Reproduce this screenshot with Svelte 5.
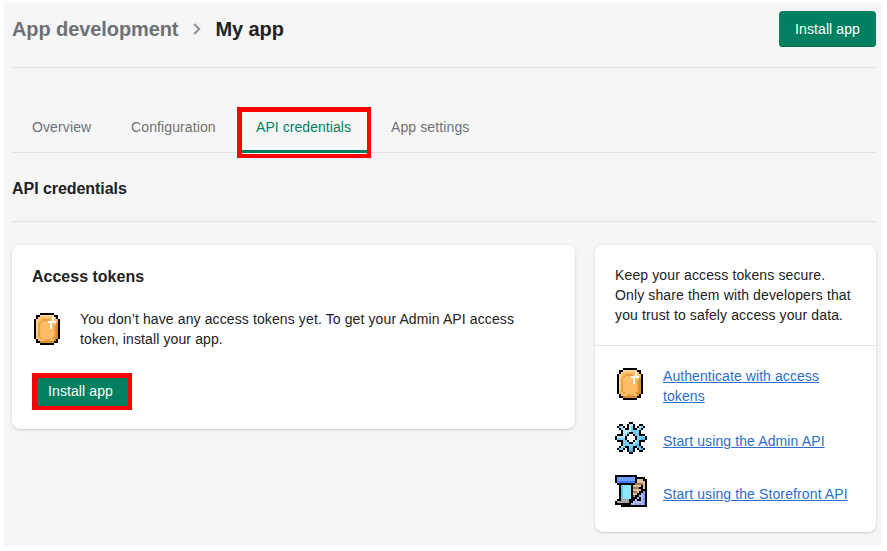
<script>
  const palette = {
    k: '#000000', y: '#ffd795', o: '#ffbe66', d: '#d98c2b', e: '#e9a044', w: '#ffffff',
    l: '#b9eaff', b: '#78cdf8', s: '#4aa8e4',
    r: '#6fa0ff', R: '#3f78f0', c: '#8fe6fa', C: '#62c8ec', g: '#a3a3a3', G: '#777777',
    t: '#dfc09a', T: '#9c7a54', n: '#65462c', p: '#b4bcff', P: '#7f9bf8'
  };
  const coin = [
    '....kkkkkkk.....',
    '..kkyyyyyyykk...',
    '..kyoooooowok...',
    '.kyooeeeeowook..',
    '.kyoeooowwwwok..',
    '.kyeooooowoodk..',
    '.kyeooooowoedk..',
    '.kyeooooowoedk..',
    '.kyeoooooooedk..',
    '.kyeoooooooedk..',
    '.kyeoooooooedk..',
    '.koeoooooooedk..',
    '.kooeoooooeddk..',
    '..koooeeeoodk...',
    '..kkdddddddkk...',
    '....kkkkkkk.....'
  ];
  const gear = [
    '.......kk.......',
    '..kk..kllk..kk..',
    '.kblk.klbk.klbk.',
    '..kblkklbkklbk..',
    '...kllllbbbbk...',
    '...kllbkkbbbk...',
    '.kkklbkwwkbbkkk.',
    'kllllkwwwwkbbbbk',
    'kbbbbkwwwwkbbssk',
    '.kkkbbkwwklbkkk.',
    '...kbbbkklbbk...',
    '...kbbbbbbbsk...',
    '..kbbkkbbkkbsk..',
    '.kbbk.kbsk.kbsk.',
    '..kk..kssk..kk..',
    '.......kk.......'
  ];
  const store = [
    'kkkkkkkkkkk.....',
    'krrrrrrrrrkkkkk.',
    'krrrrrrrrrktttkk',
    'kRRRRRRRRRkttttk',
    '.kkkkkkkkkTTTTtk',
    '..kCcccckttttktk',
    '..kCcccckTTTkktk',
    '..kCcccckttttkkk',
    '..kCcccckTTtkkPk',
    '..kCcccckttkkpPk',
    '..kCcccckTkkppPk',
    '..kCcccckkkpkpPk',
    '.kkggggkkkpkkpPk',
    'kggggggkkpppppPk',
    'kkkkkkkkppPpPpPk',
    '...kkkkkkkkkkkkk'
  ];
  const links = [
    { art: coin, label: 'Authenticate with access tokens', single: false },
    { art: gear, label: 'Start using the Admin API', single: true },
    { art: store, label: 'Start using the Storefront API', single: true }
  ];
</script>

{#snippet sprite(rows)}
  <svg class="sprite" viewBox="0 0 16 16" shape-rendering="crispEdges" aria-hidden="true">
    {#each rows as row, y}
      {#each row.split('') as cell, x}
        {#if palette[cell]}<rect {x} {y} width="1" height="1" fill={palette[cell]} />{/if}
      {/each}
    {/each}
  </svg>
{/snippet}

<main>
  <header>
    <h1>
      <span class="parent">App development</span>
      <svg class="chevron" viewBox="0 0 8 12" aria-hidden="true"><path d="M1.2 1 6.2 6l-5 5" /></svg>
      <span>My app</span>
    </h1>
    <button class="primary">Install app</button>
  </header>
  <nav>
    <a href="#overview">Overview</a>
    <a href="#configuration">Configuration</a>
    <a href="#credentials" class="active">API credentials</a>
    <a href="#settings">App settings</a>
  </nav>
  <h2 class="section">API credentials</h2>
  <div class="columns">
    <section class="card tokens">
      <h2>Access tokens</h2>
      <div class="message">
        {@render sprite(coin)}
        <p>You don’t have any access tokens yet. To get your Admin API access token, install your app.</p>
      </div>
      <button class="marked">Install app</button>
    </section>
    <aside class="card">
      <p class="advice">Keep your access tokens secure.<br />Only share them with developers that<br />you trust to safely access your data.</p>
      <ul>
        {#each links as link}
          <li class:single={link.single}>{@render sprite(link.art)}<a href="#docs">{link.label}</a></li>
        {/each}
      </ul>
    </aside>
  </div>
</main>

<style>
  :global(body) { background: #fff; }
  * { box-sizing: border-box; }
  main {
    width: 878px;
    height: 543px;
    margin: 3px 0 0 4px;
    padding: 0 6px 0 8px;
    background: #f6f6f6;
    color: #202223;
    font: 14px/20px "Liberation Sans", Arial, sans-serif;
    letter-spacing: .115px;
  }
  h1, h2, p, ul { margin: 0; }
  header {
    display: flex;
    justify-content: space-between;
    align-items: flex-start;
    height: 65px;
    padding-top: 8px;
    border-bottom: 1px solid #e1e3e5;
  }
  h1 { display: flex; align-items: center; height: 36px; font-size: 20px; line-height: 28px; letter-spacing: -.09px; }
  .parent { color: #6d7175; }
  .chevron { width: 8px; height: 12px; margin: 0 14px 0 15px; fill: none; stroke: #8c9196; stroke-width: 2; }
  button {
    height: 36px;
    padding: 0 15px;
    border: 0;
    border-radius: 4px;
    background: #008060;
    color: #fff;
    font: inherit;
    letter-spacing: .1px;
  }
  .primary { width: 97px; box-shadow: inset 0 -1px 0 #006e52; }
  nav { display: flex; height: 85px; padding-top: 39px; border-bottom: 1px solid #e1e3e5; }
  nav a { height: 51px; padding: 10px 20px; color: #6d7175; text-decoration: none; }
  nav a:first-child { width: 99px; }
  nav a:nth-child(2) { width: 125px; }
  nav a.active {
    position: relative;
    width: 134px;
    margin: 0 0 0 1px;
    padding: 5px 14px;
    border: 5px solid #f00;
    border-width: 5px 4px 4px 5px;
    color: #008060;
    letter-spacing: .06px;
  }
  nav a.active::after { content: ''; position: absolute; right: 0; bottom: 1px; left: 0; height: 3px; background: #008060; }
  h2 { font-size: 16px; line-height: 24px; letter-spacing: 0; }
  .section { height: 69px; padding-top: 24px; border-bottom: 1px solid #e1e3e5; letter-spacing: -.05px; }
  .columns { display: flex; gap: 20px; align-items: flex-start; padding-top: 23px; }
  .card { border-radius: 8px; background: #fff; box-shadow: 0 0 5px rgba(23, 24, 24, .05), 0 1px 2px rgba(0, 0, 0, .15); }
  .tokens { width: 563px; height: 184px; padding: 20px; }
  .message { display: flex; gap: 16px; align-items: center; margin-top: 20px; }
  .message p { width: 450px; }
  .sprite { width: 32px; height: 32px; flex: none; display: block; }
  .marked {
    width: 100px;
    height: 37px;
    margin-top: 24px;
    padding: 0 11px 3px;
    border: 5px solid #f00;
    border-width: 5px 4px 4px 5px;
    border-radius: 0;
    text-align: left;
  }
  aside { width: 281px; height: 287px; }
  .advice { height: 101px; padding: 20px; border-bottom: 1px solid #e1e3e5; letter-spacing: .13px; }
  ul { display: grid; gap: 14px; padding: 20px; list-style: none; }
  li { display: flex; gap: 16px; align-items: flex-start; min-height: 39px; }
  li :global(.sprite) { margin-top: 2px; }
  .single a { margin-top: 11px; }
  li a { color: #2c6ecb; text-decoration: underline; }
  li:first-child a { letter-spacing: .08px; }
</style>
